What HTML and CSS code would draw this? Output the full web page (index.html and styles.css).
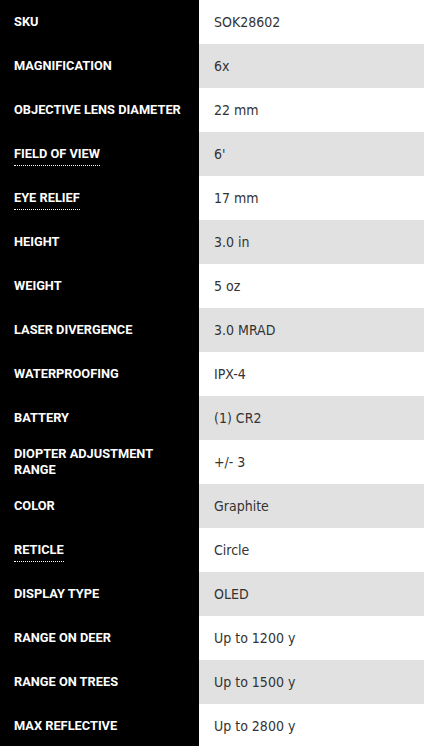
FILE: index.html
```html
<!DOCTYPE html>
<html>
<head>
<meta charset="utf-8">
<link rel="stylesheet" href="styles.css">
</head>
<body>
<div class="specs">
  <div class="row"><div class="label">SKU</div><div class="value">SOK28602</div></div>
  <div class="row alt"><div class="label">MAGNIFICATION</div><div class="value">6x</div></div>
  <div class="row"><div class="label">OBJECTIVE LENS DIAMETER</div><div class="value">22 mm</div></div>
  <div class="row alt"><div class="label"><span class="tip">FIELD OF VIEW</span></div><div class="value">6'</div></div>
  <div class="row"><div class="label"><span class="tip">EYE RELIEF</span></div><div class="value">17 mm</div></div>
  <div class="row alt"><div class="label">HEIGHT</div><div class="value">3.0 in</div></div>
  <div class="row"><div class="label">WEIGHT</div><div class="value">5 oz</div></div>
  <div class="row alt"><div class="label">LASER DIVERGENCE</div><div class="value">3.0 MRAD</div></div>
  <div class="row"><div class="label">WATERPROOFING</div><div class="value">IPX-4</div></div>
  <div class="row alt"><div class="label">BATTERY</div><div class="value">(1) CR2</div></div>
  <div class="row"><div class="label">DIOPTER ADJUSTMENT<br>RANGE</div><div class="value">+/- 3</div></div>
  <div class="row alt"><div class="label">COLOR</div><div class="value">Graphite</div></div>
  <div class="row"><div class="label"><span class="tip">RETICLE</span></div><div class="value">Circle</div></div>
  <div class="row alt"><div class="label">DISPLAY TYPE</div><div class="value">OLED</div></div>
  <div class="row"><div class="label">RANGE ON DEER</div><div class="value">Up to 1200 y</div></div>
  <div class="row alt"><div class="label">RANGE ON TREES</div><div class="value">Up to 1500 y</div></div>
  <div class="row"><div class="label">MAX REFLECTIVE</div><div class="value">Up to 2800 y</div></div>
</div>
</body>
</html>
```
FILE: styles.css
```css
html, body {
  margin: 0;
  padding: 0;
  background: #fff;
}
.specs {
  display: flex;
  flex-direction: column;
}
.row {
  display: grid;
  grid-template-columns: 199px 1fr;
  height: 44px;
}
.label {
  background: #000;
  color: #fff;
  font-family: Roboto, "DejaVu Sans Condensed", sans-serif;
  font-weight: bold;
  font-size: 12.8px;
  line-height: 16px;
  letter-spacing: 0;
  padding: 0 8px 0 14px;
  display: flex;
  align-items: center;
  flex-wrap: wrap;
  align-content: center;
}
.value {
  background: #fff;
  color: #333;
  font-family: "DejaVu Sans Condensed", "DejaVu Sans", sans-serif;
  font-size: 14px;
  line-height: 18px;
  padding: 0 15px;
  display: flex;
  align-items: center;
}
.alt .value {
  background: #e1e1e1;
}
.tip {
  border-bottom: 1px dotted #fff;
  padding-bottom: 3px;
  margin-top: 4px;
}
```
